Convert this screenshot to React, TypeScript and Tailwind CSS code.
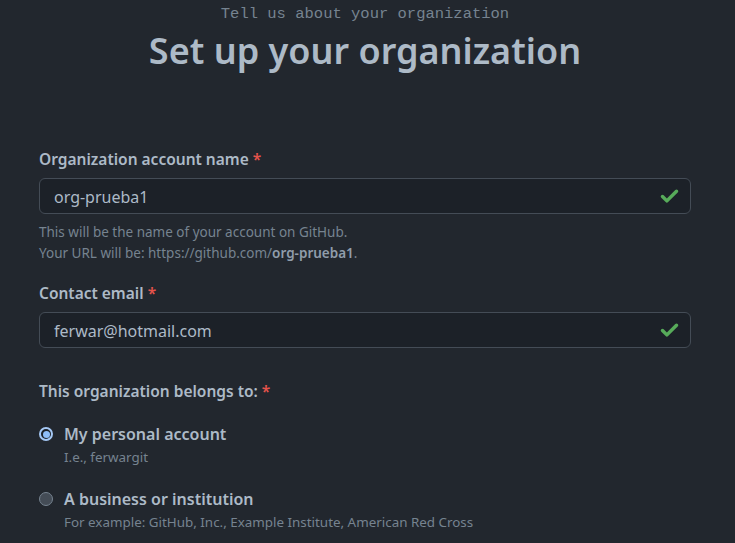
import { Check } from "lucide-react";

const sans = "font-['Segoe_UI','Noto_Sans',sans-serif]";

function Field({ label, value }: { label: string; value: string }) {
  return (
    <div>
      <label className="block text-[15.5px] leading-6 font-semibold text-[#adbac7]">
        {label} <span className="text-[#e5534b]">*</span>
      </label>
      <div className="mt-[7px] flex h-9 items-center rounded-md border border-[#444c56] bg-[#1c2128] pl-[14px] pr-[10px]">
        <span className="flex-1 pt-[1px] text-[16px] text-[#adbac7]">{value}</span>
        <Check className="h-[21px] w-[21px] text-[#57ab5a]" strokeWidth={4} />
      </div>
    </div>
  );
}

function Radio({
  checked,
  title,
  note,
}: {
  checked: boolean;
  title: string;
  note: string;
}) {
  return (
    <div className="flex gap-[11px]">
      <span
        className={
          checked
            ? "mt-[5px] flex h-[14px] w-[14px] items-center justify-center rounded-full border-2 border-[#a5c8f5] bg-[#1c2128]"
            : "mt-[5px] h-[14px] w-[14px] rounded-full border border-[#768390] bg-[#444c56]"
        }
      >
        {checked && <span className="h-[7px] w-[7px] rounded-full bg-[#8ebdf7]" />}
      </span>
      <div>
        <div className="text-[16px] leading-6 font-semibold text-[#adbac7]">{title}</div>
        <div className="mt-[1px] text-[13.4px] leading-[21px] text-[#768390]">{note}</div>
      </div>
    </div>
  );
}

export default function App() {
  return (
    <div className={`min-h-screen bg-[#22272e] ${sans}`}>
      <div className="ml-[39px] w-[652px]">
        <p className="pt-[4px] text-center font-['Liberation_Mono',monospace] text-[15.5px] leading-5 text-[#768390]">
          Tell us about your organization
        </p>
        <h1 className="mt-[3px] text-center text-[36px] leading-[48px] font-semibold text-[#adbac7]">
          Set up your organization
        </h1>

        <div className="mt-[72px]">
          <Field label="Organization account name" value="org-prueba1" />
          <p className="mt-[8px] text-[13.5px] leading-[21px] text-[#768390]">
            This will be the name of your account on GitHub.
            <br />
            Your URL will be: https://github.com/
            <span className="font-semibold text-[#909dab]">org-prueba1</span>.
          </p>
        </div>

        <div className="mt-[17px]">
          <Field label="Contact email" value="ferwar@hotmail.com" />
        </div>

        <div className="mt-[31px]">
          <label className="block text-[15.5px] leading-6 font-semibold text-[#adbac7]">
            This organization belongs to: <span className="text-[#e5534b]">*</span>
          </label>
          <div className="mt-[19px] flex flex-col gap-[19px]">
            <Radio checked title="My personal account" note="I.e., ferwargit" />
            <Radio
              checked={false}
              title="A business or institution"
              note="For example: GitHub, Inc., Example Institute, American Red Cross"
            />
          </div>
        </div>
      </div>
    </div>
  );
}
